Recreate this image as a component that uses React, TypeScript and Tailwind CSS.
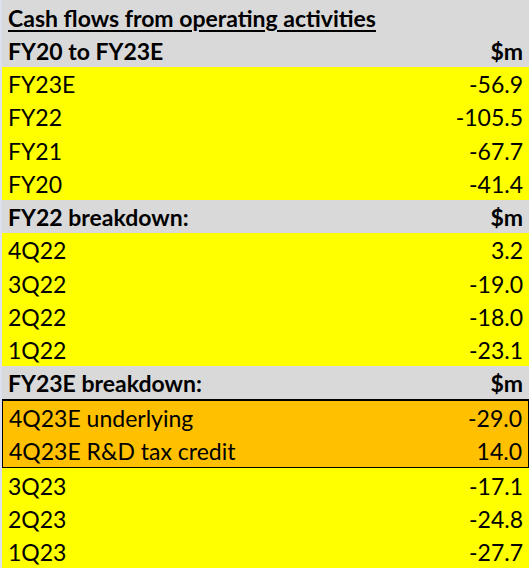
import React from "react";

type Row = { kind: "title" | "head" | "y" | "o"; l: string; r?: string };

const top: Row[] = [
  { kind: "title", l: "Cash flows from operating activities" },
  { kind: "head", l: "FY20 to FY23E", r: "$m" },
  { kind: "y", l: "FY23E", r: "-56.9" },
  { kind: "y", l: "FY22", r: "-105.5" },
  { kind: "y", l: "FY21", r: "-67.7" },
  { kind: "y", l: "FY20", r: "-41.4" },
  { kind: "head", l: "FY22 breakdown:", r: "$m" },
  { kind: "y", l: "4Q22", r: "3.2" },
  { kind: "y", l: "3Q22", r: "-19.0" },
  { kind: "y", l: "2Q22", r: "-18.0" },
  { kind: "y", l: "1Q22", r: "-23.1" },
  { kind: "head", l: "FY23E breakdown:", r: "$m" },
];
const orange: Row[] = [
  { kind: "o", l: "4Q23E underlying", r: "-29.0" },
  { kind: "o", l: "4Q23E R&D tax credit", r: "14.0" },
];
const bottom: Row[] = [
  { kind: "y", l: "3Q23", r: "-17.1" },
  { kind: "y", l: "2Q23", r: "-24.8" },
  { kind: "y", l: "1Q23", r: "-27.7" },
];

function R({ row }: { row: Row }) {
  const bg =
    row.kind === "title" || row.kind === "head"
      ? "bg-[#d9d9d9]"
      : row.kind === "o"
      ? "bg-[#ffc000]"
      : "bg-[#ffff00]";
  const bold = row.kind === "title" || row.kind === "head" ? "font-bold" : "";
  return (
    <div className={`flex h-[33.4px] items-center justify-between px-[6px] pt-[3px] ${bg} ${bold}`}>
      <span className={row.kind === "title" ? "underline decoration-[2px] underline-offset-[3px]" : ""}>{row.l}</span>
      {row.r && <span>{row.r}</span>}
    </div>
  );
}

export default function App() {
  return (
    <div
      className="w-[529px] h-[568px] overflow-hidden flex flex-col text-[23px] leading-none text-black border-l-[2px] border-l-[#dde1ee]"
      style={{ fontFamily: "Lato, 'Open Sans', sans-serif" }}
    >
      {top.map((r, i) => (
        <R key={"t" + i} row={r} />
      ))}
      <div className="border-2 border-black -mx-[1px]">
        {orange.map((r, i) => (
          <div key={"o" + i} className="-my-[0.5px]">
            <R row={r} />
          </div>
        ))}
      </div>
      {bottom.map((r, i) => (
        <R key={"b" + i} row={r} />
      ))}
    </div>
  );
}
